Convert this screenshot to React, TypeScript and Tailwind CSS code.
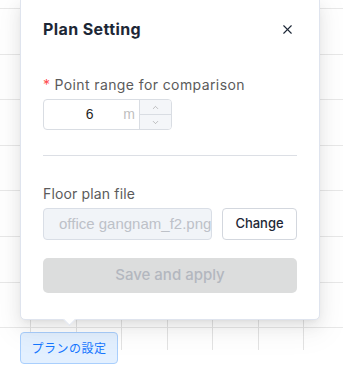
import { X, ChevronUp, ChevronDown } from "lucide-react";

const rows = [0, 1, 2, 3, 4, 5, 6, 7];
const cols = [0, 1, 2, 3, 4, 5, 6];

function GridBackdrop() {
  return (
    <div className="absolute inset-x-0 top-0 h-[350px]">
      <div className="flex flex-col pt-[8px]">
        {rows.map((r) => (
          <div key={r} className="h-[45.6px] border-t border-[#e8e8e8]" />
        ))}
      </div>
      <div className="absolute inset-y-0 left-[30px] flex">
        {cols.map((c) => (
          <div key={c} className="h-full w-[45.5px] border-l border-[#e3e3e3]" />
        ))}
      </div>
    </div>
  );
}

function NumberField() {
  return (
    <div className="mt-[4px] flex h-[31px] w-[129px] overflow-hidden rounded-[4px] border border-[#d9dde3] bg-white">
      <div className="flex flex-1 items-center pl-[12px] font-['Liberation_Sans',sans-serif] text-[14px]">
        <span className="flex-1 text-center text-[#1f1f1f]">6</span>
        <span className="pr-[4px] text-[#bfbfbf]">m</span>
      </div>
      <div className="flex w-[32px] flex-col border-l border-[#d9dde3] bg-[#f4f6f9] text-[#8c8c8c]">
        <div className="flex flex-1 items-center justify-center border-b border-[#d9dde3]">
          <ChevronUp size={9} strokeWidth={1.4} />
        </div>
        <div className="flex flex-1 items-center justify-center">
          <ChevronDown size={9} strokeWidth={1.4} />
        </div>
      </div>
    </div>
  );
}

export default function App() {
  return (
    <div className="relative h-[375px] w-[343px] overflow-hidden bg-white font-['Inter',sans-serif]">
      <GridBackdrop />

      <div className="relative flex flex-col items-start pl-[20px]">
        <div className="relative -mt-px w-[300px] rounded-b-[5px] border border-[#dfe4ee] bg-white px-[22px] pb-[26px] pt-[17px] shadow-[0_6px_16px_rgba(0,0,0,0.08),0_3px_6px_-4px_rgba(0,0,0,0.1),0_9px_28px_8px_rgba(0,0,0,0.04)]">
          <div className="flex h-6 items-center justify-between">
            <h2 className="text-[16px] font-bold tracking-[0.4px] text-[#1d2736]">Plan Setting</h2>
            <X size={15} strokeWidth={1.8} className="mr-[2px] text-[#1d2736]" />
          </div>

          <p className="mt-[34px] h-5 text-[14px] leading-5 tracking-[0.4px] text-[#5b5b5b]">
            <span className="mr-[4px] text-[#ff4d4f]">*</span>
            Point range for comparison
          </p>
          <NumberField />

          <div className="mt-[25px] h-px bg-[#dcdfe5]" />

          <p className="mt-[28px] h-5 text-[14px] leading-5 tracking-[0.15px] text-[#5b5b5b]">Floor plan file</p>
          <div className="mt-[4px] flex h-[32px] gap-[10px]">
            <div className="flex w-[169px] items-center overflow-hidden whitespace-nowrap rounded-[4px] border border-[#d9dee6] bg-[#f1f4f8] pl-[15px] pr-[3px] font-['Liberation_Sans',sans-serif] text-[15px] text-[#bdc1c8]">
              office gangnam_f2.png
            </div>
            <button className="flex flex-1 items-center justify-center rounded-[4px] border border-[#d3d7de] bg-white text-[13px] font-medium text-[#1d2736]">
              Change
            </button>
          </div>

          <button className="mt-[18px] flex h-[35px] w-full items-center justify-center rounded-[5px] bg-[#dcdddd] text-[15px] font-medium text-[#b3b7bf]">
            Save and apply
          </button>

          <div className="absolute -bottom-[5px] left-[44px] h-[9px] w-[9px] rotate-45 border-b border-r border-[#dfe4ee] bg-white" />
        </div>

        <button className="mt-[12px] flex h-[32px] w-[98px] items-center justify-center rounded-[4px] border border-[#a9cffd] bg-[#e3f0ff] font-['Noto_Sans_CJK_JP',sans-serif] text-[12px] tracking-[0.5px] text-[#1677ff]">
          プランの設定
        </button>
      </div>
    </div>
  );
}
